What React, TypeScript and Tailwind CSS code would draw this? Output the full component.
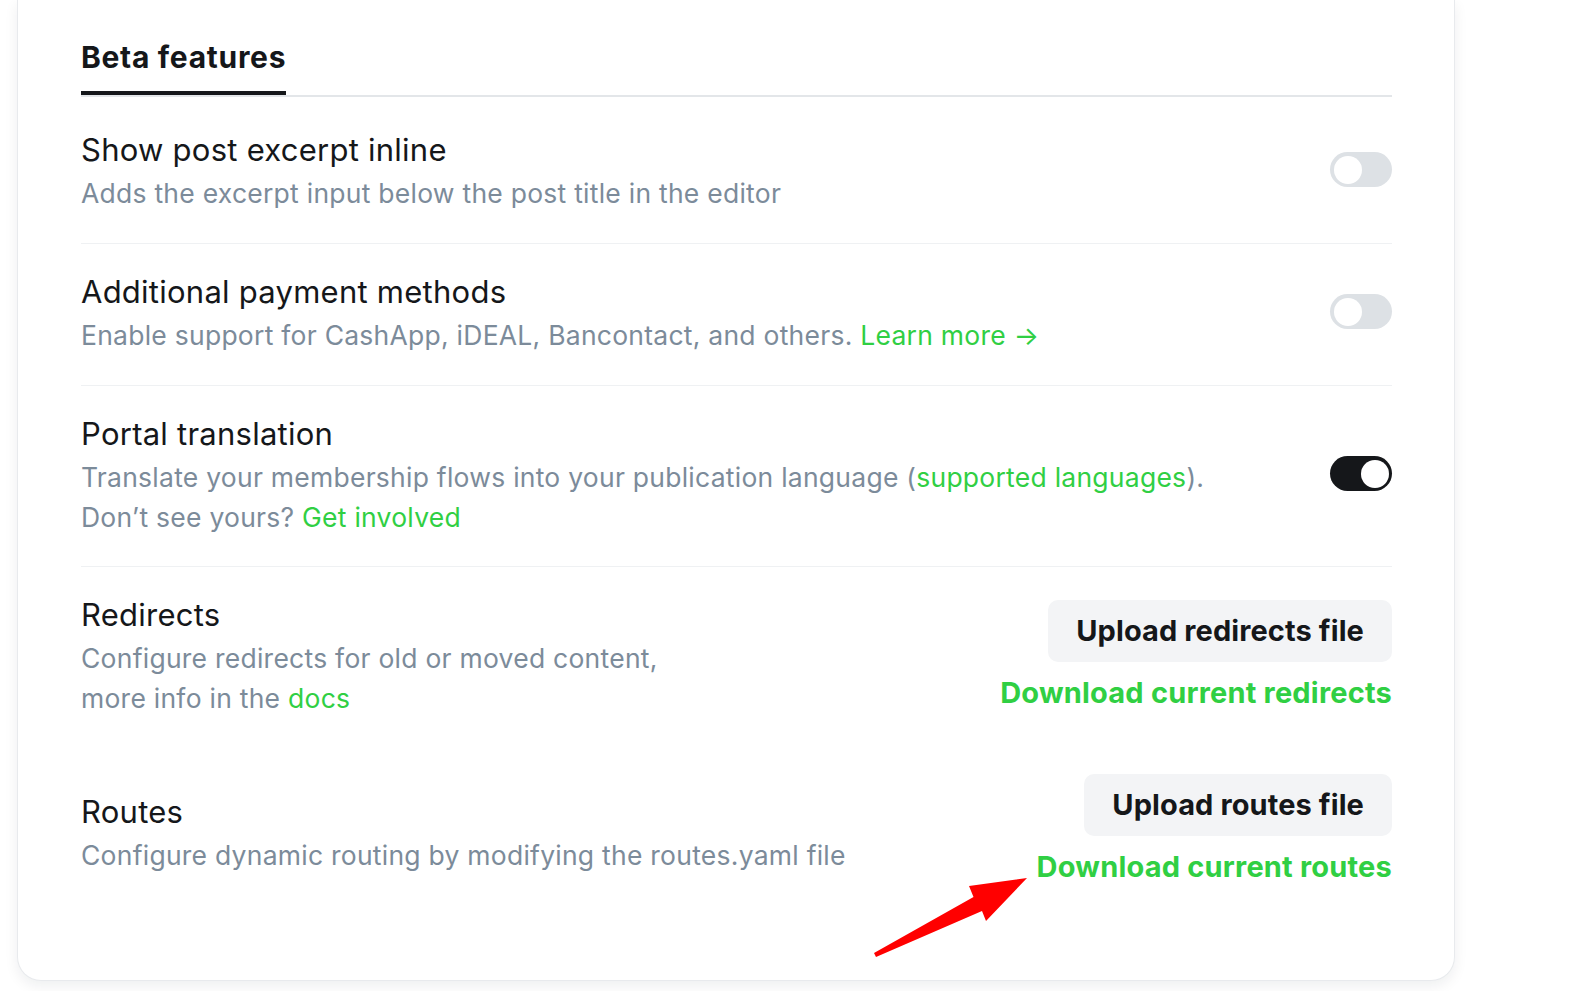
import React from "react";

function Toggle({ on }: { on?: boolean }) {
  return (
    <div
      className={
        "mb-[4px] flex h-[35px] w-[62px] shrink-0 items-center rounded-full px-[3.5px] " +
        (on ? "justify-end bg-[#15171a]" : "justify-start bg-[#dde1e5]")
      }
    >
      <div className="h-[28px] w-[28px] rounded-full bg-white" />
    </div>
  );
}

function Title({ children }: { children: React.ReactNode }) {
  return (
    <div className="text-[31px] leading-[40px] tracking-[0.25px] text-[#15171a]">{children}</div>
  );
}

function Desc({ children }: { children: React.ReactNode }) {
  return (
    <div className="mt-[3px] text-[26.5px] leading-[40px] tracking-[0.25px] text-[#7c8b9a]">
      {children}
    </div>
  );
}

function Link({ children }: { children: React.ReactNode }) {
  return <span className="text-[#30cf43]">{children}</span>;
}

function FileActions({ upload, download }: { upload: string; download: string }) {
  return (
    <div className="flex shrink-0 flex-col items-end">
      <div className="flex h-[62px] items-center rounded-[10px] bg-[#f3f4f6] px-[28px] text-[29px] font-bold tracking-[0.1px] text-[#15171a]">
        {upload}
      </div>
      <div className="mt-[11px] text-[29px] font-bold leading-[40px] tracking-[0.2px] text-[#30cf43]">
        {download}
      </div>
    </div>
  );
}

export default function App() {
  return (
    <div className="relative h-[991px] w-[1581px] overflow-hidden bg-white font-['Inter','Noto_Sans',sans-serif]">
      <div className="ml-[17px] w-[1438px] rounded-b-[24px] border-x border-b border-[#e8eaed] bg-white pb-[93px] pl-[63px] pr-[62px] pt-[36px] shadow-[0_5px_14px_rgba(20,30,40,0.07)]">
        <div className="flex border-b-2 border-[#e3e6e9]">
          <div className="border-b-4 border-[#15171a] pb-[13px] text-[30px] font-bold leading-[42px] tracking-[0.7px] text-[#15171a]">
            Beta features
          </div>
        </div>

        <div className="flex items-center justify-between border-b border-[#eff1f3] pb-[30px] pt-[33px]">
          <div>
            <Title>Show post excerpt inline</Title>
            <Desc>Adds the excerpt input below the post title in the editor</Desc>
          </div>
          <Toggle />
        </div>

        <div className="flex items-center justify-between border-b border-[#eff1f3] pb-[30px] pt-[28px]">
          <div>
            <Title>Additional payment methods</Title>
            <Desc>
              Enable support for CashApp, iDEAL, Bancontact, and others. <Link>Learn more →</Link>
            </Desc>
          </div>
          <Toggle />
        </div>

        <div className="flex items-center justify-between border-b border-[#eff1f3] pb-[29px] pt-[28px]">
          <div>
            <Title>Portal translation</Title>
            <Desc>
              Translate your membership flows into your publication language (<Link>supported languages</Link>).
              <br />
              Don’t see yours? <Link>Get involved</Link>
            </Desc>
          </div>
          <Toggle on />
        </div>

        <div className="flex items-center justify-between pb-[30px] pt-[28px]">
          <div>
            <Title>Redirects</Title>
            <Desc>
              Configure redirects for old or moved content,
              <br />
              more info in the <Link>docs</Link>
            </Desc>
          </div>
          <FileActions upload="Upload redirects file" download="Download current redirects" />
        </div>

        <div className="flex items-center justify-between pt-[26px]">
          <div className="mt-[5px]">
            <Title>Routes</Title>
            <Desc>Configure dynamic routing by modifying the routes.yaml file</Desc>
          </div>
          <FileActions upload="Upload routes file" download="Download current routes" />
        </div>
      </div>

      <svg
        className="pointer-events-none absolute left-0 top-0"
        width="1581"
        height="991"
        viewBox="0 0 1581 991"
      >
        <polygon
          points="1027,878 969,886 973.5,897 874,953 876,957 982,911 986,921"
          fill="#ff0000"
        />
      </svg>
    </div>
  );
}
